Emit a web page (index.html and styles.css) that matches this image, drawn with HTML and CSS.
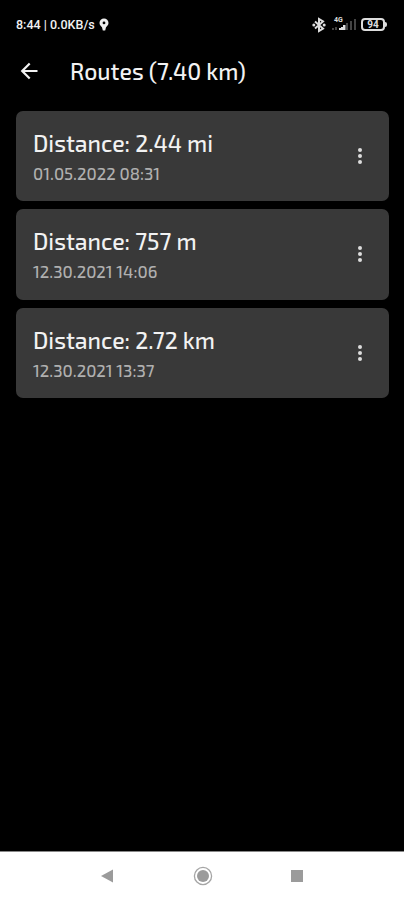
FILE: index.html
```
<!DOCTYPE html>
<html lang="en">
<head>
    <meta charset="UTF-8">
    <meta name="viewport" content="width=device-width, initial-scale=1.0">
    <title>Routes</title>
    <link rel="stylesheet" href="styles.css">
</head>
<body>
    <div class="status-bar">
        <div class="status-left">
            <span class="status-text">8:44 | 0.0KB/s</span>
            <svg class="pin" width="10" height="13" viewBox="0 0 10 13">
                <path fill="#eee" fill-rule="evenodd" d="M5 .5a4.500 4.500 0 0 1 4.500 4.500c0 2-1.700 3.400-2.500 4.200L6.200 12.500H3.800L3 9.200C2.200 8.400.5 7 .5 5A4.500 4.500 0 0 1 5 .5zM5 3.500a1.400 1.400 0 1 0 0 2.800 1.400 1.400 0 0 0 0-2.800z"/>
            </svg>
        </div>
        <div class="status-right">
            <svg width="14" height="16" viewBox="0 0 14 16">
                <path fill="none" stroke="#ddd" stroke-width="2" d="M3 4.500l8 7L7 14V2l4 2.500-8 7"/>
                <circle cx="1.800" cy="8" r="1.500" fill="#ddd"/>
                <circle cx="12.200" cy="8" r="1.500" fill="#ddd"/>
            </svg>
            <div class="signal">
                <span class="network">4G</span>
                <svg width="25" height="13" viewBox="0 0 25 13">
                    <path fill="#444" d="M0 12v-2h2v2zM3 12V9h2v3zM14 5h2v7h-2zM18 3h2v9h-2zM22 1h2v11h-2z"/>
                    <path fill="#ddd" d="M7 10h2v2H7zM9 9h2v3H9zM11 7h2.500v5H11z"/>
                </svg>
            </div>
            <div class="battery">94</div>
        </div>
    </div>

    <header>
        <svg class="back" width="18" height="18" viewBox="0 0 18 18">
            <path fill="none" stroke="#f2f2f2" stroke-width="2.200" d="M17.500 9H2.500M9.700 1.500L2.200 9l7.500 7.500"/>
        </svg>
        <h1>Routes (7.40 km)</h1>
    </header>

    <main>
        <div class="route">
            <div class="route-info">
                <h2>Distance: 2.44 mi</h2>
                <p>01.05.2022 08:31</p>
            </div>
            <div class="menu"><i></i><i></i><i></i></div>
        </div>
        <div class="route">
            <div class="route-info">
                <h2>Distance: 757 m</h2>
                <p>12.30.2021 14:06</p>
            </div>
            <div class="menu"><i></i><i></i><i></i></div>
        </div>
        <div class="route">
            <div class="route-info">
                <h2>Distance: 2.72 km</h2>
                <p>12.30.2021 13:37</p>
            </div>
            <div class="menu"><i></i><i></i><i></i></div>
        </div>
    </main>

    <nav>
        <svg width="14" height="16" viewBox="0 0 14 16">
            <path fill="#9b9b9b" d="M13 1.500v13L1 8z"/>
        </svg>
        <svg width="20" height="20" viewBox="0 0 20 20">
            <circle cx="10" cy="10" r="8.600" fill="none" stroke="#a5a5a5" stroke-width="1.300"/>
            <circle cx="10" cy="10" r="6" fill="#9b9b9b"/>
        </svg>
        <div class="square"></div>
    </nav>
</body>
</html>
```

FILE: styles.css
```
* {
    box-sizing: border-box;
}

body {
    display: flex;
    flex-direction: column;
    height: 900px;
    margin: 0;
    background: #000;
    color: #f2f2f2;
    font-family: "Exo 2", "Noto Sans", sans-serif;
    overflow: hidden;
}

.status-bar {
    display: flex;
    justify-content: space-between;
    height: 49px;
    padding: 0 16px 0 16px;
}

.status-left,
.status-right {
    display: flex;
    align-items: center;
}

.status-text {
    font: 500 12.5px Roboto, sans-serif;
    white-space: nowrap;
}

.pin {
    margin-left: 4px;
}

.signal {
    position: relative;
    height: 13px;
    margin: 0 4px 0 6px;
}

.signal svg {
    display: block;
}

.network {
    position: absolute;
    top: -1px;
    left: 2px;
    font: bold 7px/7px Roboto, sans-serif;
    color: #ddd;
}

.battery {
    position: relative;
    width: 24px;
    height: 13px;
    margin-right: 3px;
    border: 2px solid #ddd;
    border-radius: 4px;
    font: bold 10px/10px Roboto, sans-serif;
    text-align: center;
    color: #ddd;
}

.battery::after {
    content: "";
    position: absolute;
    top: 2px;
    right: -4px;
    width: 2px;
    height: 5px;
    border-radius: 0 2px 2px 0;
    background: #ddd;
}

header {
    display: flex;
    align-items: center;
    height: 44px;
    padding-left: 20px;
}

h1,
h2 {
    margin: 0;
    font-size: 23px;
    font-weight: 500;
    line-height: 30px;
    white-space: nowrap;
}

h1 {
    margin-left: 32px;
}

main {
    display: flex;
    flex: 1;
    flex-direction: column;
    gap: 8.3px;
    padding: 17.7px 15px 0 16px;
}

.route {
    display: flex;
    align-items: center;
    justify-content: space-between;
    height: 90.3px;
    padding: 0 27.5px 0 17px;
    border-radius: 7px;
    background: #393939;
}

.route-info {
    padding-top: 1px;
}

.route p {
    margin: 3px 0 0;
    font-size: 16.8px;
    font-weight: 500;
    line-height: 24px;
    color: #b0b0b0;
}

.menu {
    display: flex;
    flex-direction: column;
    gap: 2px;
}

.menu i {
    width: 4px;
    height: 4px;
    border-radius: 50%;
    background: #ddd;
}

nav {
    display: flex;
    align-items: center;
    justify-content: space-between;
    height: 49px;
    padding: 0 101px 0 100px;
    border-top: 1px solid #888;
    background: #fff;
}

.square {
    width: 12px;
    height: 12px;
    background: #9b9b9b;
}
```
